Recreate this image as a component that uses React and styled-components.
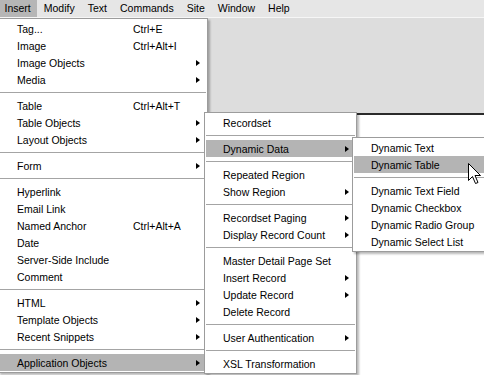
import React from 'react';
import styled, {createGlobalStyle} from 'styled-components';

const GlobalStyle = createGlobalStyle`
  html, body {
    margin: 0;
    padding: 0;
    overflow: hidden;
    background: #ffffff;
  }

  body {
    font-family: "Liberation Sans", Arial, sans-serif;
    font-size: 10.5px;
    color: #000000;
  }
`;

const Screen = styled.div`
  position: relative;
  display: flex;
  flex-direction: column;
  width: 484px;
  height: 375px;
  overflow: hidden;
`;

const MenuBar = styled.div`
  display: flex;
  height: 17px;
  margin-left: -2px;
  background: #e6e6e6;
  border-bottom: 1px solid #f6f6f6;
`;

const BarItem = styled.div`
  padding: 0 6.5px;
  line-height: 17px;
  background: ${({$open}) => ($open ? '#b6b6b6' : 'transparent')};
`;

const Panel = styled.div`
  height: 95px;
  background: #dddddd;
`;

const Document = styled.div`
  flex: 1;
  background: #ffffff;
  border-top: 2px solid #2a2a2a;
`;

const Menu = styled.div`
  position: absolute;
  left: ${({$left}) => $left}px;
  top: ${({$top}) => $top}px;
  width: ${({$width}) => $width}px;
  box-sizing: border-box;
  padding: 1px;
  background: #ffffff;
  border: 1px solid #9c9c9c;
  box-shadow: 2px 2px 2px rgba(0, 0, 0, 0.28);
`;

const Row = styled.div`
  display: flex;
  align-items: center;
  height: 17px;
  padding: 0 6px 0 17px;
  white-space: nowrap;
  background: ${({$active}) => ($active ? '#b4b4b4' : 'transparent')};
`;

const Label = styled.span`
  flex: none;
  width: ${({$width}) => ($width ? `${$width}px` : 'auto')};
`;

const Shortcut = styled.span`
  flex: none;
`;

const Arrow = styled.span`
  margin-left: auto;
  width: 0;
  height: 0;
  border-top: 3.5px solid transparent;
  border-bottom: 3.5px solid transparent;
  border-left: 4px solid #000000;
`;

const Separator = styled.div`
  height: 1px;
  margin: 4px 0;
  background: #a4a4a4;
`;

const Pointer = styled.svg`
  position: absolute;
  left: 468px;
  top: 163px;
`;

const insertItems = [
  {label: 'Tag...', shortcut: 'Ctrl+E'},
  {label: 'Image', shortcut: 'Ctrl+Alt+I'},
  {label: 'Image Objects', sub: true},
  {label: 'Media', sub: true},
  'sep',
  {label: 'Table', shortcut: 'Ctrl+Alt+T'},
  {label: 'Table Objects', sub: true},
  {label: 'Layout Objects', sub: true},
  'sep',
  {label: 'Form', sub: true},
  'sep',
  {label: 'Hyperlink'},
  {label: 'Email Link'},
  {label: 'Named Anchor', shortcut: 'Ctrl+Alt+A'},
  {label: 'Date'},
  {label: 'Server-Side Include'},
  {label: 'Comment'},
  'sep',
  {label: 'HTML', sub: true},
  {label: 'Template Objects', sub: true},
  {label: 'Recent Snippets', sub: true},
  'sep',
  {label: 'Application Objects', sub: true, active: true}
];

const applicationItems = [
  {label: 'Recordset'},
  'sep',
  {label: 'Dynamic Data', sub: true, active: true},
  'sep',
  {label: 'Repeated Region'},
  {label: 'Show Region', sub: true},
  'sep',
  {label: 'Recordset Paging', sub: true},
  {label: 'Display Record Count', sub: true},
  'sep',
  {label: 'Master Detail Page Set'},
  {label: 'Insert Record', sub: true},
  {label: 'Update Record', sub: true},
  {label: 'Delete Record'},
  'sep',
  {label: 'User Authentication', sub: true},
  'sep',
  {label: 'XSL Transformation'}
];

const dynamicItems = [
  {label: 'Dynamic Text'},
  {label: 'Dynamic Table', active: true},
  'sep',
  {label: 'Dynamic Text Field'},
  {label: 'Dynamic Checkbox'},
  {label: 'Dynamic Radio Group'},
  {label: 'Dynamic Select List'}
];

const PopupMenu = ({items, left, top, width, labelWidth}) => (
  <Menu $left={left} $top={top} $width={width}>
    {items.map((item, i) =>
      item === 'sep'
        ? <Separator key={i} />
        : (
          <Row key={i} $active={item.active}>
            <Label $width={item.shortcut ? labelWidth : null}>{item.label}</Label>
            {item.shortcut && <Shortcut>{item.shortcut}</Shortcut>}
            {item.sub && <Arrow />}
          </Row>
        )
    )}
  </Menu>
);

const App = () => {
  const menus = ['Insert', 'Modify', 'Text', 'Commands', 'Site', 'Window', 'Help'];

  return (
    <>
      <GlobalStyle />
      <Screen>
        <MenuBar>
          {menus.map(name => (
            <BarItem key={name} $open={name === 'Insert'}>{name}</BarItem>
          ))}
        </MenuBar>
        <Panel />
        <Document />

        <PopupMenu items={insertItems} left={-2} top={18} width={210} labelWidth={116} />
        <PopupMenu items={applicationItems} left={204} top={112} width={153} />
        <PopupMenu items={dynamicItems} left={352} top={137} width={140} />

        <Pointer width="14" height="23" viewBox="0 0 14 23">
          <path
            d="M0.5 0.5 L0.5 17.5 L4.5 13.5 L7.5 20.5 L10 19.5 L7 12.5 L12.5 12.5 Z"
            fill="#ffffff"
            stroke="#000000"
            strokeWidth="1"
            strokeLinejoin="miter"
          />
        </Pointer>
      </Screen>
    </>
  );
};

export default App;
